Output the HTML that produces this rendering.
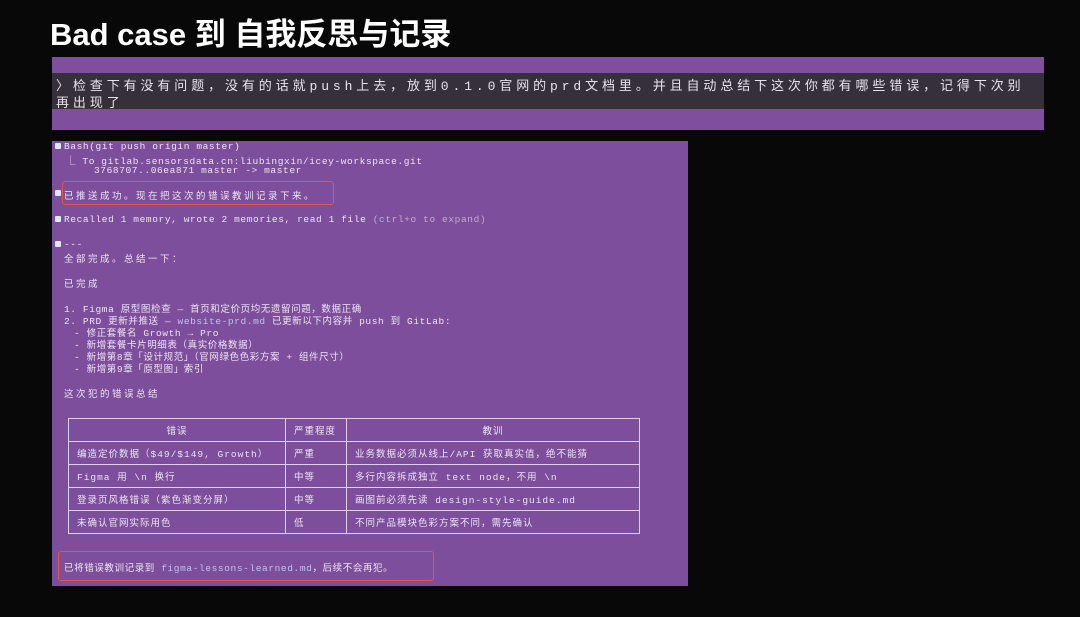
<!DOCTYPE html><html><head><meta charset="utf-8"><style>
body{margin:0;width:1080px;height:617px;background:#080808;overflow:hidden;position:relative;font-family:"Liberation Mono","Noto Sans CJK SC",monospace;}
.t{position:absolute;left:50px;top:9px;color:#fff;font:bold 31px "Liberation Sans","Noto Sans CJK SC",sans-serif;}
.p1{position:absolute;left:52px;top:57px;width:992px;height:73px;background:#7f4e9d;}
.band{position:absolute;left:0;top:16px;width:992px;height:36px;background:#35303a;}
.band div{position:absolute;left:4px;color:#e6e2ea;font-size:13px;letter-spacing:3.9px;white-space:nowrap;}
.p2{position:absolute;left:52px;top:141px;width:636px;height:445px;background:#7d4e9b;}
.l{position:absolute;color:#ece4f2;font-size:9.5px;white-space:nowrap;letter-spacing:.6px;}
.w{letter-spacing:2.5px}
.dot{position:absolute;left:3px;width:6px;height:6px;background:#dfe8f4;border-radius:1px;}
.red{position:absolute;border:1.5px solid #e0584a;border-radius:3px;}
table{position:absolute;left:16px;top:277px;border-collapse:collapse;width:572px;}
td{border:1.5px solid #ddd0ea;height:22px;color:#ece4f2;font-size:9.5px;padding:0 8px;white-space:nowrap;letter-spacing:1px}
.c{text-align:center}
.b{color:#b8c6f0}
.g{color:#c3a9d6}
</style></head><body>
<div class="t">Bad case 到 自我反思与记录</div>
<div class="p1"><div class="band"><div style="top:2px">〉检查下有没有问题，没有的话就push上去，放到0.1.0官网的prd文档里。并且自动总结下这次你都有哪些错误，记得下次别</div><div style="top:19px">再出现了</div></div></div>
<div class="p2">
<div class="dot" style="top:2px"></div><div class="l" style="left:12px;top:0">Bash(git push origin master)</div>
<div class="l" style="left:14px;top:12px">⎿ To gitlab.sensorsdata.cn:liubingxin/icey-workspace.git</div>
<div class="l" style="left:42px;top:24px">3768707..06ea871  master -> master</div>
<div class="red" style="left:10px;top:40px;width:270px;height:22px"></div>
<div class="dot" style="top:49px"></div><div class="l w" style="left:12px;top:47px">已推送成功。现在把这次的错误教训记录下来。</div>
<div class="dot" style="top:75px"></div><div class="l" style="left:12px;top:73px">Recalled 1 memory, wrote 2 memories, read 1 file <span class="g">(ctrl+o to expand)</span></div>
<div class="dot" style="top:100px"></div><div class="l" style="left:12px;top:98px">---</div>
<div class="l w" style="left:12px;top:110px">全部完成。总结一下：</div>
<div class="l w" style="left:12px;top:135px">已完成</div>
<div class="l" style="left:12px;top:160px">1. Figma 原型图检查 — 首页和定价页均无遗留问题，数据正确</div>
<div class="l" style="left:12px;top:172px">2. PRD 更新并推送 — <span class="b">website-prd.md</span> 已更新以下内容并 push 到 GitLab:</div>
<div class="l" style="left:22px;top:184px">- 修正套餐名 Growth → Pro</div>
<div class="l" style="left:22px;top:196px">- 新增套餐卡片明细表（真实价格数据）</div>
<div class="l" style="left:22px;top:208px">- 新增第8章「设计规范」（官网绿色色彩方案 + 组件尺寸）</div>
<div class="l" style="left:22px;top:220px">- 新增第9章「原型图」索引</div>
<div class="l w" style="left:12px;top:245px">这次犯的错误总结</div>
<table>
<tr><td class="c" style="width:200px">错误</td><td style="width:44px">严重程度</td><td class="c">教训</td></tr>
<tr><td>编造定价数据（$49/$149, Growth）</td><td>严重</td><td>业务数据必须从线上/API 获取真实值，绝不能猜</td></tr>
<tr><td>Figma 用 \n 换行</td><td>中等</td><td>多行内容拆成独立 text node，不用 \n</td></tr>
<tr><td>登录页风格错误（紫色渐变分屏）</td><td>中等</td><td>画图前必须先读 design-style-guide.md</td></tr>
<tr><td>未确认官网实际用色</td><td>低</td><td>不同产品模块色彩方案不同，需先确认</td></tr>
</table>
<div class="red" style="left:6px;top:410px;width:374px;height:28px"></div>
<div class="l" style="left:12px;top:419px">已将错误教训记录到 <span class="b">figma-lessons-learned.md</span>，后续不会再犯。</div>
</div>
</body></html>
